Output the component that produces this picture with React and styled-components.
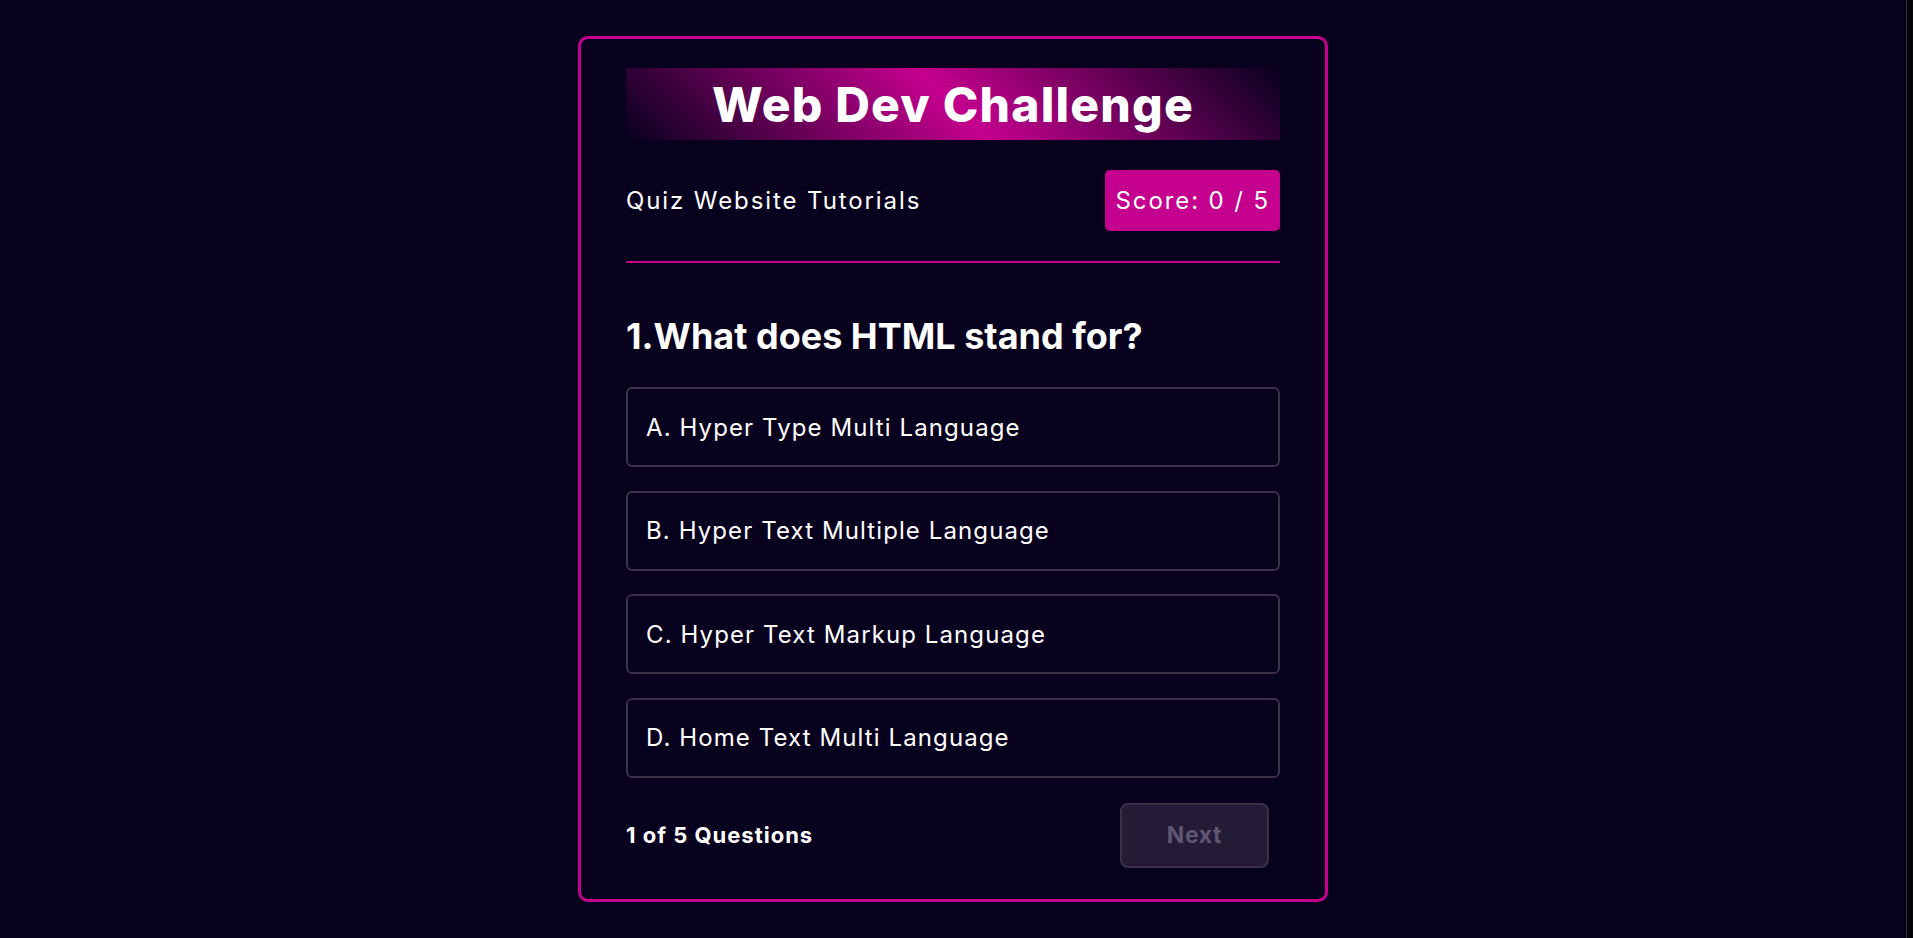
import React, { useState } from "react";
import styled, { createGlobalStyle } from "styled-components";

const questions = [
  {
    question: "What does HTML stand for?",
    options: [
      "Hyper Type Multi Language",
      "Hyper Text Multiple Language",
      "Hyper Text Markup Language",
      "Home Text Multi Language",
    ],
  },
];

const GlobalStyle = createGlobalStyle`
  * { box-sizing: border-box; }
  html, body {
    margin: 0;
    padding: 0;
    background: #08011e;
    font-family: "Inter", "Open Sans", sans-serif;
    color: #fff;
  }
`;

const Screen = styled.div`
  display: flex;
  min-height: 100vh;
`;

const Page = styled.main`
  flex: 1;
  display: flex;
  align-items: center;
  justify-content: center;
`;

const Gutter = styled.div`
  width: 7px;
  background: #050308;
  border-left: 1px solid #34303c;
`;

const Card = styled.section`
  width: 750px;
  border: 3px solid #c5008f;
  border-radius: 10px;
  padding: 29px 45px 31px;
  display: flex;
  flex-direction: column;
`;

const Banner = styled.h1`
  margin: 0;
  height: 72px;
  display: flex;
  align-items: center;
  justify-content: center;
  background: linear-gradient(45deg, transparent, #c5008f, transparent);
  font-size: 48px;
  font-weight: 800;
  letter-spacing: 1.2px;
`;

const Header = styled.div`
  display: flex;
  justify-content: space-between;
  align-items: center;
  padding: 30px 0;
  border-bottom: 2px solid #c5008f;
  font-size: 24px;
  letter-spacing: 1.9px;
`;

const Score = styled.div`
  height: 61px;
  display: flex;
  align-items: center;
  padding: 0 10px 0 11px;
  background: #c5008f;
  border-radius: 5px;
`;

const Question = styled.h2`
  margin: 51px 0 29px;
  font-size: 36px;
  line-height: 44px;
  font-weight: 700;
`;

const Options = styled.ul`
  list-style: none;
  margin: 0;
  padding: 0;
  display: flex;
  flex-direction: column;
  gap: 23.4px;
`;

const Option = styled.li`
  height: 80px;
  display: flex;
  align-items: center;
  padding: 0 18px;
  border: 2px solid ${(p) => (p.$picked ? "#c5008f" : "#3b3249")};
  border-radius: 6px;
  font-size: 24px;
  letter-spacing: 1.1px;
  cursor: pointer;
`;

const Footer = styled.div`
  margin-top: 25px;
  display: flex;
  justify-content: space-between;
  align-items: center;
`;

const Count = styled.span`
  font-size: 22px;
  font-weight: 700;
  letter-spacing: 1px;
`;

const NextButton = styled.button`
  width: 149px;
  height: 65px;
  margin-right: 11px;
  background: #241b36;
  border: 2px solid #3b3249;
  border-radius: 8px;
  color: #5f5672;
  font-family: inherit;
  font-size: 23px;
  font-weight: 700;
  letter-spacing: 0.6px;
`;

const letters = ["A", "B", "C", "D"];

export default function App() {
  const [index] = useState(0);
  const [picked, setPicked] = useState(null);
  const q = questions[index];

  return (
    <>
      <GlobalStyle />
      <Screen>
        <Page>
          <Card>
            <Banner>Web Dev Challenge</Banner>
            <Header>
              <span>Quiz Website Tutorials</span>
              <Score>Score: 0 / 5</Score>
            </Header>
            <Question>
              {index + 1}.{q.question}
            </Question>
            <Options>
              {q.options.map((opt, i) => (
                <Option key={opt} $picked={picked === i} onClick={() => setPicked(i)}>
                  {letters[i]}. {opt}
                </Option>
              ))}
            </Options>
            <Footer>
              <Count>{index + 1} of 5 Questions</Count>
              <NextButton disabled={picked === null}>Next</NextButton>
            </Footer>
          </Card>
        </Page>
        <Gutter />
      </Screen>
    </>
  );
}
